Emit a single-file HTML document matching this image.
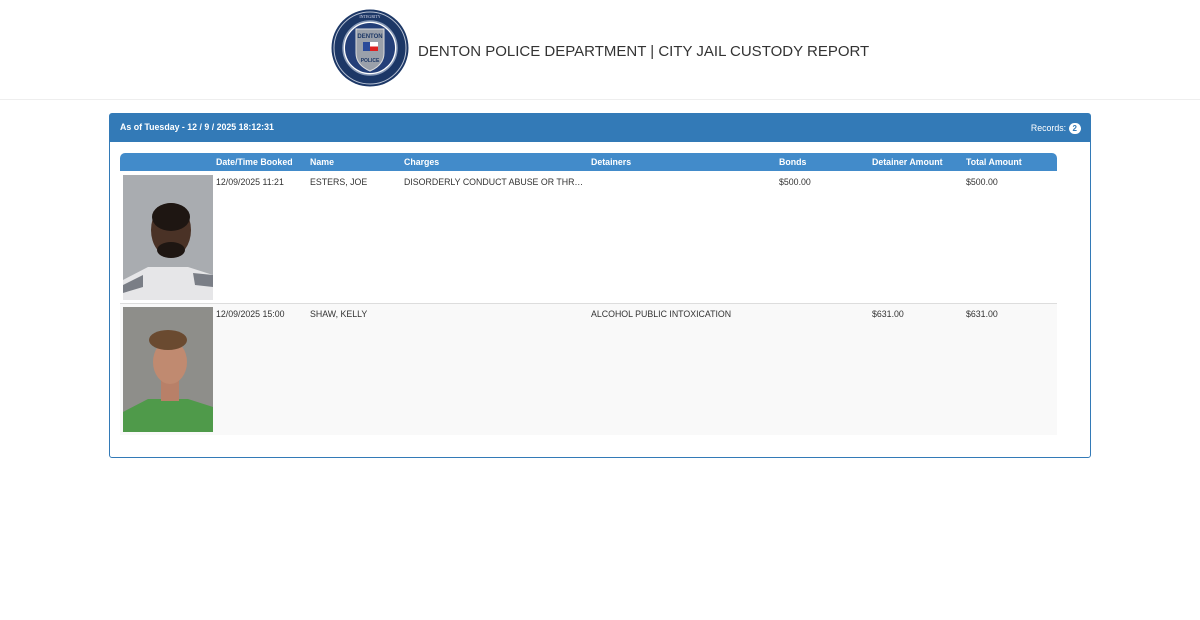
<!DOCTYPE html>
<html><head><meta charset="utf-8"><style>
body{margin:0;background:#fff;font-family:"Liberation Sans",sans-serif;color:#333;font-size:8.8px;width:1200px;height:620px;overflow:hidden}
.hdr{height:99px;border-bottom:1px solid #eee;position:relative;background:#fff}
.hdr .t{position:absolute;left:418px;top:43px;font-size:15px;color:#333}
.panel{position:absolute;left:109px;top:113px;width:980px;height:343px;border:1px solid #337ab7;border-radius:3px}
.ph{background:#337ab7;height:28px;color:#fff;font-weight:bold;position:relative}
.ph .l{position:absolute;left:10px;top:8px}
.ph .r{position:absolute;right:9px;top:9px;font-weight:normal}
.badge{display:inline-block;background:#fff;color:#337ab7;border-radius:7px;padding:1px 4px;font-size:8px;font-weight:bold}
.th{position:absolute;left:10px;top:39px;width:937px;height:18px;background:#428bca;border-radius:5px 5px 0 0;color:#fff;font-weight:bold}
.c{position:absolute}
.row{position:absolute;left:10px;width:937px}
.row .c{top:5px}
.photo{position:absolute;left:3px;top:3px;width:90px;height:125px}
</style></head><body>
<div class="hdr">
<svg style="position:absolute;left:331px;top:9px" width="78" height="78" viewBox="0 0 78 78">
<circle cx="39" cy="39" r="38.5" fill="#1c3766"/>
<circle cx="39" cy="39" r="36" fill="none" stroke="#b8c2d4" stroke-width="1"/>
<circle cx="39" cy="39" r="27" fill="#fff" stroke="#8a9bb8" stroke-width="1.5"/>
<circle cx="39" cy="39" r="25" fill="#243f78"/>
<path d="M25 20 L53 20 L53 44 Q53 56 39 62 Q25 56 25 44 Z" fill="#9aa0aa" stroke="#ddd" stroke-width="1"/>
<text x="39" y="29" font-size="6" font-weight="bold" fill="#1c3766" text-anchor="middle" font-family="Liberation Sans">DENTON</text>
<rect x="32" y="33" width="7" height="9" fill="#2a4a9a"/><rect x="39" y="33" width="8" height="4.5" fill="#fff"/><rect x="39" y="37.5" width="8" height="4.5" fill="#d22"/>
<text x="39" y="53" font-size="5" font-weight="bold" fill="#1c3766" text-anchor="middle" font-family="Liberation Sans">POLICE</text>
<text x="39" y="9" font-size="4" fill="#dde" text-anchor="middle" font-family="Liberation Serif">INTEGRITY</text>
</svg>
<div class="t">DENTON POLICE DEPARTMENT | CITY JAIL CUSTODY REPORT</div>
</div>
<div class="panel">
<div class="ph"><span class="l">As of Tuesday - 12 / 9 / 2025 18:12:31</span><span class="r">Records: <span class="badge">2</span></span></div>
<div class="th">
<span class="c" style="left:96px;top:4px">Date/Time Booked</span>
<span class="c" style="left:190px;top:4px">Name</span>
<span class="c" style="left:284px;top:4px">Charges</span>
<span class="c" style="left:471px;top:4px">Detainers</span>
<span class="c" style="left:659px;top:4px">Bonds</span>
<span class="c" style="left:752px;top:4px">Detainer Amount</span>
<span class="c" style="left:846px;top:4px">Total Amount</span>
</div>
<div class="row" style="top:58px;height:131px;border-bottom:1px solid #ddd">
<svg class="photo" viewBox="0 0 90 125"><rect width="90" height="125" fill="#a9acb0"/><path d="M0 105 L25 92 L65 92 L90 100 L90 125 L0 125Z" fill="#e6e6e8"/><path d="M0 110 L20 100 L20 112 L0 118Z M70 98 L90 100 L90 112 L72 110Z" fill="#7a7e86"/><ellipse cx="48" cy="55" rx="20" ry="27" fill="#4a3226"/><ellipse cx="48" cy="42" rx="19" ry="14" fill="#1e1612"/><ellipse cx="48" cy="75" rx="14" ry="8" fill="#1e1612"/></svg>
<span class="c" style="left:96px">12/09/2025 11:21</span>
<span class="c" style="left:190px">ESTERS, JOE</span>
<span class="c" style="left:284px">DISORDERLY CONDUCT ABUSE OR THR…</span>
<span class="c" style="left:659px">$500.00</span>
<span class="c" style="left:846px">$500.00</span>
</div>
<div class="row" style="top:190px;height:131px;background:#f9f9f9">
<svg class="photo" viewBox="0 0 90 125"><rect width="90" height="125" fill="#8e8e8a"/><path d="M0 105 L25 92 L65 92 L90 100 L90 125 L0 125Z" fill="#4f9a4a"/><rect x="38" y="72" width="18" height="22" fill="#b88068"/><ellipse cx="47" cy="55" rx="17" ry="22" fill="#c08a70"/><ellipse cx="45" cy="33" rx="19" ry="10" fill="#6a4a30"/></svg>
<span class="c" style="left:96px">12/09/2025 15:00</span>
<span class="c" style="left:190px">SHAW, KELLY</span>
<span class="c" style="left:471px">ALCOHOL PUBLIC INTOXICATION</span>
<span class="c" style="left:752px">$631.00</span>
<span class="c" style="left:846px">$631.00</span>
</div>
</div>
</body></html>
